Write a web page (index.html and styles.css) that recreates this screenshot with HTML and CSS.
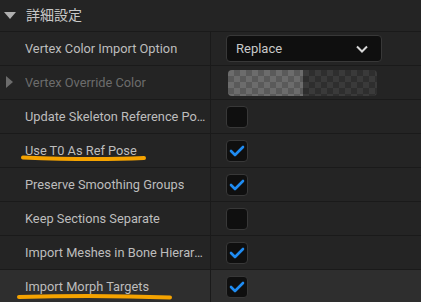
FILE: index.html
```html
<!DOCTYPE html>
<html lang="ja">
<head>
    <meta charset="UTF-8">
    <title>詳細設定</title>
    <link rel="stylesheet" href="styles.css">
</head>
<body>
    <div class="panel">
        <div class="header">
            <span class="arrow-down"></span>
            <span class="header-title">詳細設定</span>
        </div>

        <div class="row">
            <div class="name"><span class="label">Vertex Color Import Option</span></div>
            <div class="value">
                <div class="combo">
                    <span>Replace</span>
                    <svg width="14" height="10" viewBox="0 0 14 10"><path d="M2 2.5 L7 7.5 L12 2.5" fill="none" stroke="#d8d8d8" stroke-width="2"/></svg>
                </div>
            </div>
        </div>

        <div class="row">
            <div class="name disabled"><span class="arrow-right"></span><span class="label">Vertex Override Color</span></div>
            <div class="value">
                <div class="swatch"><div class="swatch-a"></div><div class="swatch-b"></div></div>
            </div>
        </div>

        <div class="row">
            <div class="name"><span class="label">Update Skeleton Reference Pose</span></div>
            <div class="value"><div class="check"></div></div>
        </div>

        <div class="row">
            <div class="name"><span class="label">Use T0 As Ref Pose</span></div>
            <div class="value"><div class="check on"><svg width="16" height="12" viewBox="0 0 16 12"><path d="M2 6 L6 10 L14 2" fill="none" stroke="#1f8cf2" stroke-width="2.6" stroke-linecap="round" stroke-linejoin="round"/></svg></div></div>
        </div>

        <div class="row">
            <div class="name"><span class="label">Preserve Smoothing Groups</span></div>
            <div class="value"><div class="check on"><svg width="16" height="12" viewBox="0 0 16 12"><path d="M2 6 L6 10 L14 2" fill="none" stroke="#1f8cf2" stroke-width="2.6" stroke-linecap="round" stroke-linejoin="round"/></svg></div></div>
        </div>

        <div class="row">
            <div class="name"><span class="label">Keep Sections Separate</span></div>
            <div class="value"><div class="check"></div></div>
        </div>

        <div class="row">
            <div class="name"><span class="label">Import Meshes in Bone Hierarchy</span></div>
            <div class="value"><div class="check on"><svg width="16" height="12" viewBox="0 0 16 12"><path d="M2 6 L6 10 L14 2" fill="none" stroke="#1f8cf2" stroke-width="2.6" stroke-linecap="round" stroke-linejoin="round"/></svg></div></div>
        </div>

        <div class="row hover">
            <div class="name"><span class="label">Import Morph Targets</span></div>
            <div class="value"><div class="check on"><svg width="16" height="12" viewBox="0 0 16 12"><path d="M2 6 L6 10 L14 2" fill="none" stroke="#1f8cf2" stroke-width="2.6" stroke-linecap="round" stroke-linejoin="round"/></svg></div></div>
        </div>

        <!-- hand drawn marks -->
        <svg class="marks" width="421" height="302" viewBox="0 0 421 302">
            <path d="M23 157.5 C60 159 110 159.5 144 158" fill="none" stroke="#f5a300" stroke-width="4" stroke-linecap="round"/>
            <path d="M19 297 C70 295.5 130 296 170 297.5" fill="none" stroke="#f5a300" stroke-width="4" stroke-linecap="round"/>
        </svg>
    </div>
</body>
</html>
```

FILE: styles.css
```css
body {
    margin: 0;
    background-color: #242424;
    font-family: Roboto, "Noto Sans CJK JP", sans-serif;
}
.panel {
    position: relative;
    width: 421px;
    height: 302px;
    overflow: hidden;
    background-color: #242424;
}
.header {
    display: flex;
    align-items: center;
    height: 31px;
    border-bottom: 1px solid #1a1a1a;
    color: #c8c8c8;
    font-size: 14px;
}
.arrow-down {
    width: 0;
    height: 0;
    margin: 0 10px 0 4px;
    border-left: 6px solid transparent;
    border-right: 6px solid transparent;
    border-top: 7px solid #b0b0b0;
}
.header-title {
    margin-top: -3px;
}
.row {
    display: flex;
    height: 33px;
    border-bottom: 1px solid #1a1a1a;
}
.row.hover {
    background-color: #2e2e2e;
}
.name {
    display: flex;
    align-items: center;
    width: 211px;
    box-sizing: border-box;
    padding: 0 4px 0 25px;
    border-right: 1px solid #1a1a1a;
    color: #bdbdbd;
    font-size: 12.8px;
    position: relative;
}
.label {
    white-space: nowrap;
    overflow: hidden;
    text-overflow: ellipsis;
}
.name.disabled {
    color: #6c6c6c;
}
.arrow-right {
    position: absolute;
    left: 6px;
    top: 10px;
    width: 0;
    height: 0;
    border-top: 6px solid transparent;
    border-bottom: 6px solid transparent;
    border-left: 7px solid #6c6c6c;
}
.value {
    flex: 1;
    display: flex;
    align-items: center;
    padding-left: 15px;
}
.combo {
    display: flex;
    align-items: center;
    justify-content: space-between;
    width: 156px;
    height: 27px;
    box-sizing: border-box;
    padding: 0 12px 0 9px;
    background-color: #0f0f0f;
    border: 1px solid #383838;
    border-radius: 4px;
    color: #c8c8c8;
    font-size: 13px;
}
.swatch {
    display: flex;
    width: 149px;
    height: 26px;
    margin-left: 2px;
    border-radius: 4px;
    overflow: hidden;
}
.swatch-a, .swatch-b {
    flex: 1;
    background-size: 12px 12px;
    background-position: 0 0, 6px 6px;
}
.swatch-a {
    background-color: #6c6c6c;
    background-image:
        linear-gradient(45deg, #5a5a5a 25%, transparent 25%, transparent 75%, #5a5a5a 75%),
        linear-gradient(45deg, #5a5a5a 25%, transparent 25%, transparent 75%, #5a5a5a 75%);
}
.swatch-b {
    background-color: #3a3a3a;
    background-image:
        linear-gradient(45deg, #2e2e2e 25%, transparent 25%, transparent 75%, #2e2e2e 75%),
        linear-gradient(45deg, #2e2e2e 25%, transparent 25%, transparent 75%, #2e2e2e 75%);
}
.check {
    display: flex;
    align-items: center;
    justify-content: center;
    width: 22px;
    height: 22px;
    box-sizing: border-box;
    background-color: #0f0f0f;
    border: 1px solid #383838;
    border-radius: 4px;
}
.marks {
    position: absolute;
    left: 0;
    top: 0;
    pointer-events: none;
}
```
